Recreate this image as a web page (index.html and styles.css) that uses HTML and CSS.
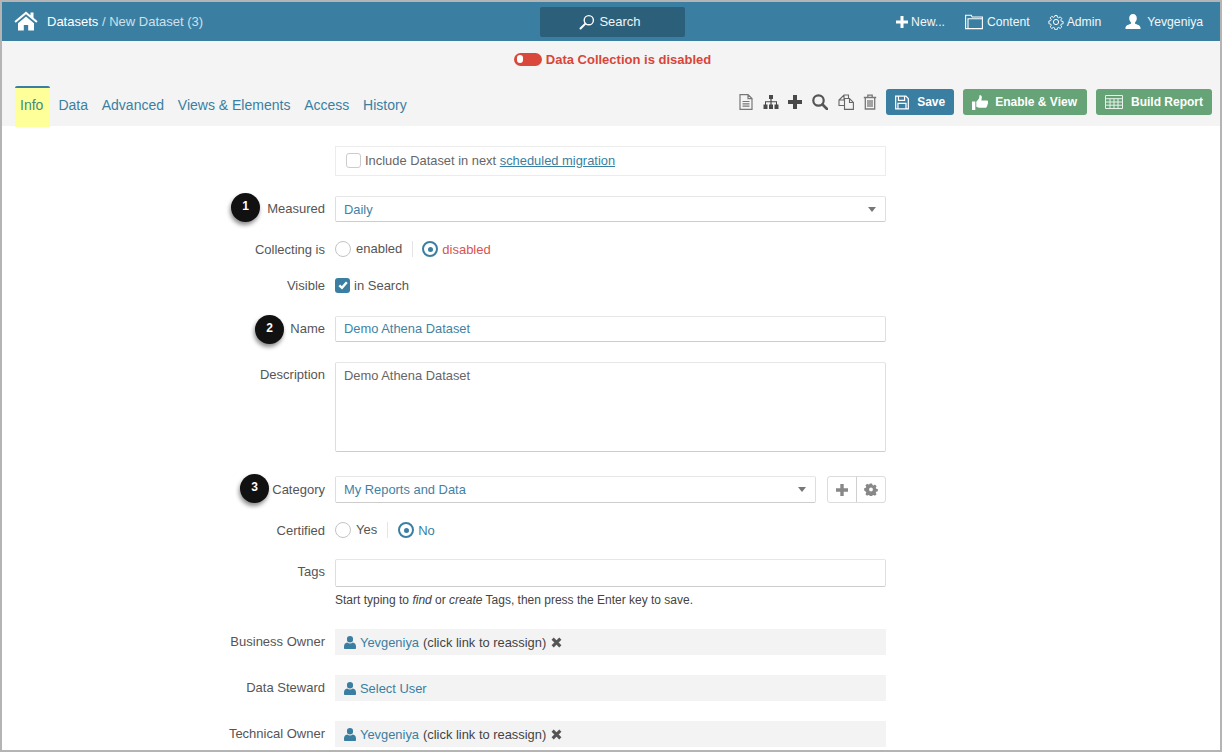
FILE: index.html
```html
<!DOCTYPE html>
<html lang="en">
<head>
<meta charset="utf-8">
<title>New Dataset</title>
<link rel="stylesheet" href="styles.css">
</head>
<body>
<div class="frame">
  <header class="topbar">
    <div class="crumbs">
      <svg class="home" viewBox="0 0 24 20" width="24" height="20"><path fill="#fff" d="M12 0.5 0.4 10.2l1.3 1.500L12 3.200l10.300 8.500 1.300-1.500L19.500 6.800V1.500h-3v2.800zM4 12.300V19.500h5.800v-5.600h4.400v5.600H20v-7.200L12 5.600z"/></svg>
      <span class="crumb-strong">Datasets</span><span class="crumb-dim">&nbsp;/ New Dataset (3)</span>
    </div>
    <div class="searchbtn">
      <svg viewBox="0 0 16 16" width="16" height="16"><circle cx="9.800" cy="6.200" r="4.600" fill="none" stroke="#fff" stroke-width="1.400"/><path d="M6.400 9.600 1.500 14.500" stroke="#fff" stroke-width="2" stroke-linecap="round"/></svg>
      <span>Search</span>
    </div>
    <nav class="topnav">
      <span class="navitem nav-new"><svg viewBox="0 0 12 12" width="12" height="12"><path fill="#fff" d="M4.500 0h3v4.500H12v3H7.500V12h-3V7.500H0v-3h4.500z"/></svg>New...</span>
      <span class="navitem nav-content"><svg viewBox="0 0 18 16" width="18" height="16"><path fill="none" stroke="#fff" stroke-width="1.100" d="M.6 14.600V1.200h5.600l1 1.800h10.200v11.600zM3 14.600V4.800h14.200"/></svg>Content</span>
      <span class="navitem nav-admin"><svg viewBox="0 0 16 16" width="16" height="16"><g fill="none" stroke="#fff"><circle cx="8" cy="8" r="2.600"/><path stroke-width="1.050" d="M6.800.8h2.400l.4 2 1.300.6 1.800-1.100 1.700 1.700-1.100 1.800.6 1.300 2 .4v2.400l-2 .4-.6 1.300 1.100 1.800-1.700 1.700-1.800-1.100-1.300.6-.4 2H6.800l-.4-2-1.300-.6-1.800 1.100-1.700-1.700 1.100-1.800-.6-1.300-2-.4V6.900l2-.4.6-1.300-1.100-1.800 1.700-1.700 1.800 1.100 1.300-.6z" transform="translate(.8 .8) scale(.9)"/></g></svg>Admin</span>
      <span class="navitem nav-user"><svg viewBox="0 0 16 16" width="16" height="16"><path fill="#fff" d="M8 0c2.300 0 3.800 1.800 3.800 4.200 0 1.700-.7 3.200-1.700 4.100v1.500c1.600.7 5.400 1.500 5.400 4.200v1H.5v-1c0-2.700 3.800-3.500 5.400-4.200V8.300C4.900 7.400 4.200 5.900 4.200 4.200 4.200 1.800 5.700 0 8 0z"/></svg>Yevgeniya</span>
    </nav>
  </header>

  <section class="subhead">
    <div class="status">
      <span class="toggle"><span class="knob"></span></span>
      <span>Data Collection is disabled</span>
    </div>
    <div class="tabrow">
      <div class="tabs">
        <span class="tab active">Info</span>
        <span class="tab">Data</span>
        <span class="tab">Advanced</span>
        <span class="tab">Views &amp; Elements</span>
        <span class="tab">Access</span>
        <span class="tab">History</span>
      </div>
      <div class="actions">
        <svg class="ico" viewBox="0 0 14 16" width="14" height="16"><path fill="none" stroke="#777" stroke-width="1.200" d="M1 .6h8l4 4v10.800H1zM9 .6v4h4M3.500 7.500h7M3.500 9.800h7M3.500 12.100h7"/></svg>
        <svg class="ico ico-tight" viewBox="0 0 16 14" width="16" height="14"><path fill="#4a4a4a" d="M6 0h4v4H8.600v2.200H14V9.500h1.500V14h-4V9.500H13V7.200H8.600v2.300H10V14H6V9.500h1.400V7.200H3v2.300h1.500V14h-4V9.500H2V6.200h5.400V4H6z"/></svg>
        <svg class="ico" viewBox="0 0 14 14" width="14" height="14"><path fill="#4a4a4a" d="M5 0h4v5h5v4H9v5H5V9H0V5h5z"/></svg>
        <svg class="ico" viewBox="0 0 16 16" width="16" height="16"><circle cx="6.500" cy="6.500" r="5.200" fill="none" stroke="#555" stroke-width="2.200"/><path d="M10.500 10.500 15 15" stroke="#555" stroke-width="2.600" stroke-linecap="round"/></svg>
        <svg class="ico ico-tight" viewBox="0 0 16 16" width="16" height="16"><path fill="none" stroke="#666" stroke-width="1.100" d="M6 11.500H1V6l5-5h4.500v3.500M6 1v5H1M6.500 4.500h5l3.900 3.900v7H6.500zM11.500 4.500v4h3.900"/></svg>
        <svg class="ico ico-last" viewBox="0 0 14 16" width="14" height="16"><path fill="none" stroke="#777" stroke-width="1.300" d="M.8 3.500h12.400M4.800 3.500V1.200h4.400v2.300M2.300 3.500V15h9.400V3.500M5 6v7M7 6v7M9 6v7"/></svg>
        <span class="btn btn-blue">
          <svg viewBox="0 0 15 15" width="15" height="15"><path fill="none" stroke="#fff" stroke-width="1.300" d="M.7.7h11l2.600 2.600v11H.7zM3.700.7v4.500h6.600V.7M3.200 14.300V8.500h8.600v5.800"/></svg>Save</span>
        <span class="btn btn-green btn-enable">
          <svg viewBox="0 0 16 15" width="16" height="15"><path fill="#fff" d="M0 6.500h3.300V15H0zM4.300 6.800 7 3.500 7.600 0c1.600 0 2.400 1.200 2.200 2.700l-.5 2.800H15c1 0 1.300 1.200.8 1.900.4.600.3 1.500-.3 1.900.2.700 0 1.400-.6 1.800.1 1-.5 1.700-1.500 1.700H8c-1.500 0-2.500-.6-3.700-1z"/></svg>Enable &amp; View</span>
        <span class="btn btn-green btn-last">
          <svg viewBox="0 0 18 14" width="18" height="14"><path fill="none" stroke="#e8f2eb" stroke-width="1" d="M.5.500h17v13H.5zM.5 3.700h17M.5 7h17M.5 10.200h17M5 3.700v9.800M9 3.700v9.800M13 3.700v9.800"/></svg>Build Report</span>
      </div>
    </div>
  </section>

  <main class="form">
    <div class="row row-migrate">
      <div class="label"></div>
      <div class="migrate"><span class="cbx"></span><span>Include Dataset in next <a class="link" href="#">scheduled migration</a></span></div>
    </div>

    <div class="row row-measured">
      <div class="label label-up">Measured</div>
      <div class="field select grow"><span>Daily</span><i class="caret"></i></div>
      <span class="badge badge-1">1</span>
    </div>

    <div class="row row-collect">
      <div class="label">Collecting is</div>
      <div class="choices">
        <span class="radio"></span><span class="opt opt-sep">enabled</span>
        <span class="radio on"></span><span class="opt red">disabled</span>
      </div>
    </div>

    <div class="row row-visible">
      <div class="label">Visible</div>
      <div class="choices">
        <span class="cbx-on"><svg viewBox="0 0 12 12" width="12" height="12"><path d="M2.300 6.300 5 8.800l4.800-5.600" fill="none" stroke="#fff" stroke-width="2.400"/></svg></span><span class="opt">in Search</span>
      </div>
    </div>

    <div class="row row-name">
      <div class="label label-up">Name</div>
      <div class="field grow">Demo Athena Dataset</div>
      <span class="badge badge-2">2</span>
    </div>

    <div class="row row-desc">
      <div class="label label-desc">Description</div>
      <div class="field textarea grow">Demo Athena Dataset</div>
    </div>

    <div class="row row-cat">
      <div class="label">Category</div>
      <div class="field select grow tall"><span>My Reports and Data</span><i class="caret"></i></div>
      <div class="btngroup">
        <span class="gbtn"><svg viewBox="0 0 12 12" width="12" height="12"><path fill="#888" d="M4.300 0h3.400v4.300H12v3.400H7.700V12H4.300V7.700H0V4.300h4.300z"/></svg></span>
        <span class="gbtn"><svg viewBox="-1 0 16 14" width="14" height="13"><path fill="#888" fill-rule="evenodd" d="M5.700 0h2.600l.4 1.900 1.200.5 1.600-1 1.900 1.900-1 1.600.5 1.200 1.900.4v2.600l-1.900.4-.5 1.200 1 1.600-1.900 1.900-1.600-1-1.200.5-.4 1.900H5.700l-.4-1.900-1.200-.5-1.600 1-1.900-1.900 1-1.600-.5-1.200L-.8 8.100V5.500l1.900-.4.500-1.200-1-1.600L2.500.4l1.600 1 1.200-.5zM7 4.800a2.200 2.200 0 1 0 0 4.400 2.200 2.200 0 0 0 0-4.400z"/></svg></span>
      </div>
      <span class="badge badge-3">3</span>
    </div>

    <div class="row row-cert">
      <div class="label">Certified</div>
      <div class="choices">
        <span class="radio"></span><span class="opt opt-sep">Yes</span>
        <span class="radio on"></span><span class="opt blue">No</span>
      </div>
    </div>

    <div class="row row-tags">
      <div class="label label-tags">Tags</div>
      <div class="tagcol">
        <div class="field tags"></div>
        <div class="help">Start typing to <em>find</em> or <em>create</em> Tags, then press the Enter key to save.</div>
      </div>
    </div>

    <div class="row row-owner">
      <div class="label label-up">Business Owner</div>
      <div class="owner">
        <svg class="uico" viewBox="0 0 12 13" width="12" height="13"><path fill="#3a7fa2" d="M6 0a3 3 0 0 1 3 3.200A3 3 0 0 1 6 6.500a3 3 0 0 1-3-3.300A3 3 0 0 1 6 0zM3.200 6.600C4 7.300 5 7.600 6 7.600s2-.3 2.800-1c2 .2 3.200 1.800 3.200 4V12c0 .6-.4 1-1 1H1c-.6 0-1-.4-1-1v-1.400c0-2.200 1.200-3.800 3.200-4z"/></svg>
        <a class="ulink">Yevgeniya</a><span class="utext">(click link to reassign)</span>
        <svg class="xico" viewBox="0 0 10 10" width="11" height="11"><path d="M1.500 1.500l7 7M8.500 1.500l-7 7" stroke="#555" stroke-width="2.800"/></svg>
      </div>
    </div>
    <div class="row row-owner">
      <div class="label label-up">Data Steward</div>
      <div class="owner">
        <svg class="uico" viewBox="0 0 12 13" width="12" height="13"><path fill="#3a7fa2" d="M6 0a3 3 0 0 1 3 3.200A3 3 0 0 1 6 6.500a3 3 0 0 1-3-3.300A3 3 0 0 1 6 0zM3.200 6.600C4 7.300 5 7.600 6 7.600s2-.3 2.800-1c2 .2 3.200 1.800 3.200 4V12c0 .6-.4 1-1 1H1c-.6 0-1-.4-1-1v-1.400c0-2.200 1.200-3.800 3.200-4z"/></svg>
        <a class="ulink">Select User</a>
      </div>
    </div>
    <div class="row row-owner">
      <div class="label label-up">Technical Owner</div>
      <div class="owner">
        <svg class="uico" viewBox="0 0 12 13" width="12" height="13"><path fill="#3a7fa2" d="M6 0a3 3 0 0 1 3 3.200A3 3 0 0 1 6 6.500a3 3 0 0 1-3-3.300A3 3 0 0 1 6 0zM3.200 6.600C4 7.300 5 7.600 6 7.600s2-.3 2.800-1c2 .2 3.200 1.800 3.200 4V12c0 .6-.4 1-1 1H1c-.6 0-1-.4-1-1v-1.400c0-2.200 1.200-3.800 3.200-4z"/></svg>
        <a class="ulink">Yevgeniya</a><span class="utext">(click link to reassign)</span>
        <svg class="xico" viewBox="0 0 10 10" width="11" height="11"><path d="M1.500 1.500l7 7M8.500 1.500l-7 7" stroke="#555" stroke-width="2.800"/></svg>
      </div>
    </div>
  </main>
</div>
</body>
</html>
```
FILE: styles.css
```css
* { box-sizing: border-box; }
html, body { margin: 0; padding: 0; height: 100%; overflow: hidden; }
body { font-family: "Liberation Sans", Arial, sans-serif; font-size: 13px; color: #555; background: #fff; }

.frame { width: 1222px; height: 752px; border: 2px solid #b4b4b4; overflow: hidden; display: flex; flex-direction: column; background: #fff; }

.topbar { height: 39px; flex: none; background: #3a7fa2; color: #fff; display: flex; align-items: center; position: relative; }
.crumbs { display: flex; align-items: center; padding-left: 12px; font-size: 13px; width: 538px; }
.home { margin-right: 9px; margin-top: -2px; }
.crumb-strong { color: #fff; }
.crumb-dim { color: #cfe0ea; }
.searchbtn { width: 145px; height: 30px; background: #2c5f7a; border-radius: 2px; display: flex; align-items: center; justify-content: center; gap: 4px; font-size: 13px; color: #f0f5f8; padding-right: 5px; }
.topnav { flex: 1; display: flex; justify-content: flex-end; align-items: center; padding-right: 17px; font-size: 12.200px; color: #f2f6f9; }
.navitem { display: flex; align-items: center; }
.nav-new svg { margin-right: 3px; }
.nav-new { margin-right: 20px; }
.nav-content svg { margin-right: 4px; }
.nav-content { margin-right: 18px; }
.nav-admin svg { margin-right: 3px; }
.nav-admin { margin-right: 24px; }
.nav-user svg { margin-right: 6px; }

.subhead { height: 85px; flex: none; background: #f4f4f4; display: flex; flex-direction: column; }
.status { height: 36px; flex: none; display: flex; align-items: center; justify-content: center; gap: 4px; color: #d9443a; font-size: 13px; font-weight: 700; padding-left: 3px; }
.toggle { width: 28px; height: 13px; border-radius: 7px; background: #d9483b; display: flex; align-items: center; padding-left: 3px; }
.knob { width: 6px; height: 8px; border-radius: 4px; background: #fff; }
.tabrow { flex: 1; min-height: 0; display: flex; justify-content: space-between; align-items: flex-start; padding: 9px 8px 0 13px; }
.tabs { display: flex; align-items: stretch; font-size: 14px; color: #3a7fa2; }
.tab { height: 40px; padding: 11px 6.900px 0; display: block; white-space: nowrap; }
.tab.active { width: 35px; height: 41px; padding: 9px 0 0 5px; margin-right: 1.500px; background: #ffff99; border-top: 2px solid #3a7fa2; border-radius: 2px 2px 0 0; color: #3f8a80; }
.actions { display: flex; align-items: center; height: 26px; margin-top: 3px; }
.ico { margin-right: 10px; flex: none; }
.ico-tight { margin-right: 9px; }
.ico-last { margin-right: 8px; }
.btn { height: 26px; border-radius: 3px; color: #fff; font-size: 12px; font-weight: 700; display: flex; align-items: center; gap: 8px; padding: 0 9px; margin-right: 9px; }
.btn-blue { background: #3a7fa2; margin-left: 1px; width: 68px; }
.btn-green { background: #66a377; }
.btn-enable { gap: 7px; padding-right: 10px; }
.btn-last { margin-right: 0; }

.form { flex: 1; display: flex; flex-direction: column; padding-top: 20px; }
.row { display: flex; align-items: center; position: relative; padding-right: 334px; }
.label { width: 323px; flex: none; text-align: right; margin-right: 10px; color: #555; font-size: 13px; }
.label-up { padding-bottom: 2px; }
.grow { flex: 1; }

.row-migrate { height: 30px; margin-bottom: 20px; }
.migrate { flex: 1; height: 30px; border: 1px solid #ececec; display: flex; align-items: center; padding: 0 0 2px 10px; gap: 4px; font-size: 12.900px; color: #666; }
.cbx { width: 15px; height: 15px; border: 1px solid #ccc; border-radius: 3px; background: #fff; }
.link { color: #3a7fa2; text-decoration: underline; }

.field { height: 26px; background: #fff; border: 1px solid #dedede; border-top-color: #e6e6e6; border-bottom-color: #cdcdcd; border-radius: 2px; color: #3f82a5; font-size: 12.900px; padding: 0 8px; display: flex; align-items: center; }
.row-name .field { padding-bottom: 2px; }
.select { justify-content: space-between; padding-right: 9px; }
.tall { height: 27px; }
.caret { width: 0; height: 0; border-left: 4.500px solid transparent; border-right: 4.500px solid transparent; border-top: 5px solid #777; }

.row-measured { height: 26px; margin-bottom: 14px; }
.row-collect { height: 26px; margin-bottom: 10px; }
.row-visible { height: 26px; margin-bottom: 18px; }
.row-name { height: 26px; margin-bottom: 20px; }
.row-desc { height: 90px; margin-bottom: 24px; align-items: flex-start; }
.textarea { height: 90px; align-items: flex-start; padding-top: 5px; color: #666; }
.label-desc { padding-top: 5px; }
.row-cat { height: 27px; margin-bottom: 14px; }
.row-cert { height: 26px; margin-bottom: 16px; }
.row-tags { height: 50px; margin-bottom: 20px; align-items: flex-start; }
.tagcol { flex: 1; display: flex; flex-direction: column; }
.tags { height: 28px; }
.label-tags { padding-top: 5px; }
.help { margin-top: 6px; font-size: 12px; color: #444; line-height: 14px; }
.row-owner { height: 26px; margin-bottom: 20px; }

.choices { display: flex; align-items: center; }
.radio { width: 16px; height: 16px; border: 1px solid #c4c4c4; border-radius: 50%; background: #fff; display: inline-block; margin-right: 5px; }
.radio.on { border: 2px solid #3a7fa2; display: flex; align-items: center; justify-content: center; margin-right: 4px; }
.radio.on::after { content: ""; width: 5px; height: 5px; border-radius: 50%; background: #3a7fa2; }
.opt { font-size: 13px; color: #555; }
.opt-sep { padding-right: 10px; border-right: 1px solid #e4e4e4; margin-right: 9px; line-height: 16px; }
.row-cert .opt-sep { margin-right: 10px; }
.red { color: #d9534f; }
.blue { color: #3a7fa2; }
.cbx-on { width: 15px; height: 15px; background: #3a7fa2; border-radius: 3px; display: flex; align-items: center; justify-content: center; margin-right: 4px; }

.btngroup { display: flex; margin-left: 11px; height: 27px; width: 59px; border: 1px solid #dcdcdc; border-radius: 3px; flex: none; }
.gbtn { flex: 1; display: flex; align-items: center; justify-content: center; }
.gbtn + .gbtn { border-left: 1px solid #d0d0d0; }

.owner { flex: 1; height: 26px; background: #f3f3f3; display: flex; align-items: center; padding-left: 9px; font-size: 12.900px; }
.uico { margin-right: 4px; }
.ulink { color: #3a7fa2; margin-right: 4px; padding-top: 1px; }
.utext { color: #444; padding-top: 1px; }
.xico { margin-left: 5px; }

.badge { position: absolute; width: 29px; height: 29px; border-radius: 50%; background: #111; color: #fff; font-size: 12px; font-weight: 700; display: flex; align-items: center; justify-content: center; box-shadow: -1px 3px 4px rgba(0,0,0,.45); padding-bottom: 3px; }
.badge-1 { left: 229px; top: -3px; }
.badge-2 { left: 253px; top: -1px; }
.badge-3 { left: 238px; top: -2px; }
```
